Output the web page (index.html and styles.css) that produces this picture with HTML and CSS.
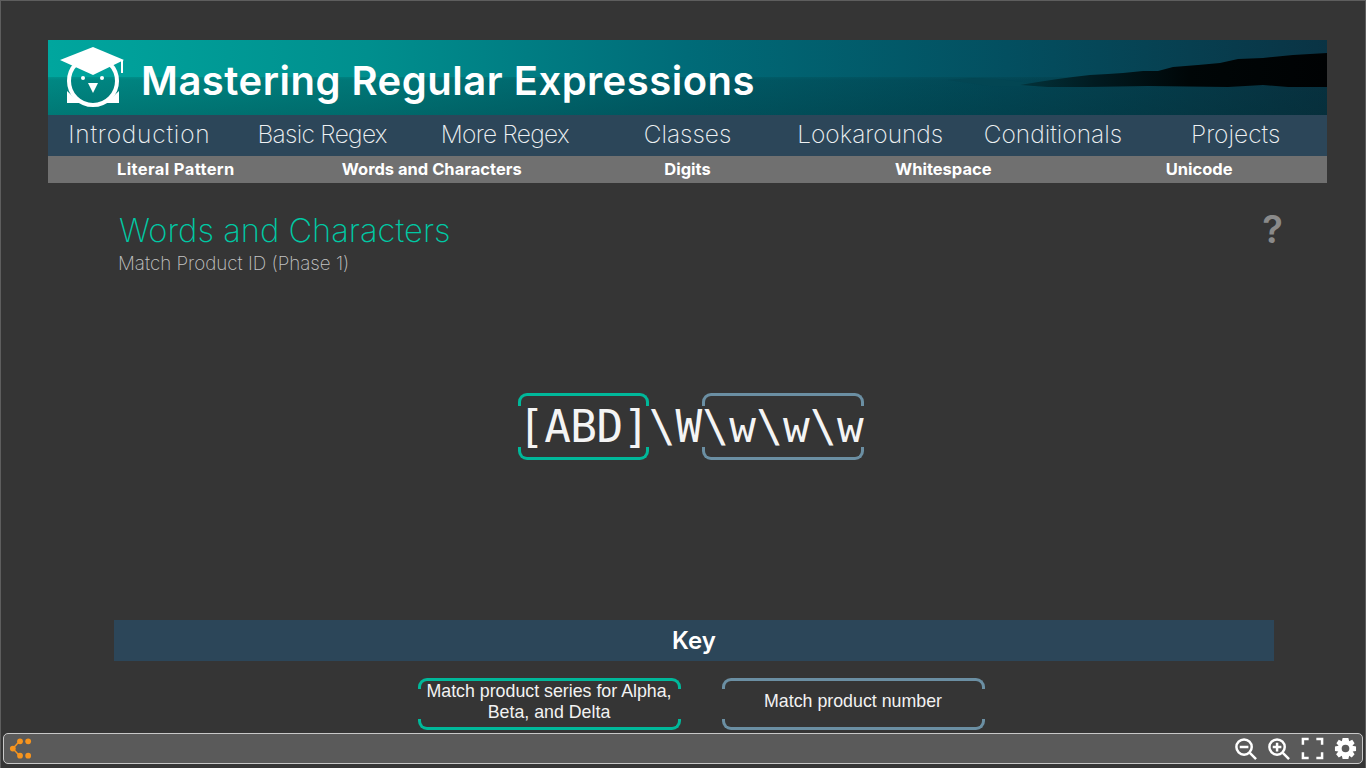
FILE: index.html
```html
<!DOCTYPE html>
<html lang="en">
<head>
<meta charset="utf-8">
<title>Mastering Regular Expressions</title>
<link rel="stylesheet" href="styles.css">
</head>
<body>
<div class="stage">
  <header class="banner">
    <svg class="banner-art" viewBox="0 0 1279 75" preserveAspectRatio="none" aria-hidden="true">
      <defs>
        <linearGradient id="islandFade" x1="0" x2="1" y1="0" y2="0">
          <stop offset="0" stop-color="#02333b"/>
          <stop offset=".25" stop-color="#011a20"/>
          <stop offset=".55" stop-color="#000607"/>
          <stop offset="1" stop-color="#000203"/>
        </linearGradient>
      </defs>
      <path class="island-far" d="M900 40 L925 38 L950 39 L975 42 L990 47 L940 46 Z"/>
      <path fill="url(#islandFade)" d="M972 45 L990 42 L1010 39 L1025 37 L1042 35 L1060 34 L1075 33 L1095 31 L1110 31 L1125 27 L1150 25 L1172 23 L1190 19 L1215 18 L1245 15 L1279 13 L1279 47 L1240 47 L1215 45 L1180 47 L1100 46 L1040 47 L1000 47 Z"/>
    </svg>
    <svg class="owl" viewBox="0 0 70 62" aria-hidden="true">
      <circle class="owl-ring" cx="33" cy="35" r="24"/>
      <path class="owl-fill" d="M7 45 L7 57 L20 57 Z"/>
      <path class="owl-fill" d="M59 45 L59 57 L46 57 Z"/>
      <path class="owl-cap" d="M0 14 L33 1 L64 14 L33 29 Z"/>
      <path class="owl-tassel" d="M62 14 L62 27"/>
      <circle class="owl-fill" cx="23" cy="32" r="2"/>
      <circle class="owl-fill" cx="42" cy="32" r="2"/>
      <path class="owl-fill" d="M28 37 L38 37 L33 47 Z"/>
    </svg>
    <h1 class="banner-title">Mastering Regular Expressions</h1>
  </header>
  <nav class="nav">
    <a class="wide">Introduction</a><a class="tight">Basic Regex</a><a class="tight">More Regex</a><a>Classes</a><a>Lookarounds</a><a>Conditionals</a><a>Projects</a>
  </nav>
  <nav class="subnav">
    <a class="wide">Literal Pattern</a><a>Words and Characters</a><a>Digits</a><a>Whitespace</a><a>Unicode</a>
  </nav>

  <section class="heading">
    <div>
      <h2 class="title">Words and Characters</h2>
      <p class="subtitle">Match Product ID (Phase 1)</p>
    </div>
    <span class="help">?</span>
  </section>

  <section class="regex">
    <span class="group group-green">[ABD]</span><span>\W</span><span class="group group-blue">\w\w\w</span>
  </section>

  <section class="key">
    <div class="key-head">Key</div>
    <div class="key-items">
      <div class="group group-green key-item">Match product series for Alpha, Beta, and Delta</div>
      <div class="group group-blue key-item">Match product number</div>
    </div>
  </section>
</div>

<footer class="toolbar">
  <svg class="tool share" viewBox="0 0 24 24" aria-hidden="true">
    <path class="share-line" d="M4 12 L11 4.5 M4 12 L11 19.5"/>
    <circle cx="4" cy="12" r="3"/><circle cx="11.5" cy="4.5" r="3"/><circle cx="20" cy="4.5" r="3"/><circle cx="11.5" cy="19.5" r="3"/><circle cx="20" cy="19.5" r="3"/>
  </svg>
  <div class="tools">
    <svg class="tool" viewBox="0 0 24 24" aria-hidden="true"><circle cx="10.5" cy="10.5" r="8"/><path d="M6 10.5 H15 M16.5 16.5 L23 23"/></svg>
    <svg class="tool" viewBox="0 0 24 24" aria-hidden="true"><circle cx="10.5" cy="10.5" r="8"/><path d="M6 10.5 H15 M10.5 6 V15 M16.5 16.5 L23 23"/></svg>
    <svg class="tool" viewBox="0 0 24 24" aria-hidden="true"><path d="M2 8 V2 H8 M16 2 H22 V8 M22 16 V22 H16 M8 22 H2 V16"/></svg>
    <svg class="tool gear" viewBox="0 0 24 24" aria-hidden="true"><path d="M9 1 H15 L15.8 4.5 L19 2.8 L21.5 6.5 L19.2 9 L23 10 V14.5 L19.5 15 L21.5 18 L18.5 21.5 L15.8 19.5 L15 23 H9 L8.2 19.5 L5 21.5 L2.2 18 L4.5 15 L1 14.5 V10 L4.8 9 L2.5 6.5 L5 2.8 L8.2 4.5 Z M12 8 A4 4 0 1 0 12 16 A4 4 0 1 0 12 8 Z"/></svg>
  </div>
</footer>
</body>
</html>
```
FILE: styles.css
```css
* { box-sizing: border-box; }
html, body { margin: 0; height: 768px; overflow: hidden; }
body {
  position: relative;
  background: #353535;
  border: 1px solid #5e5e5e;
  border-bottom: 0;
  font-family: Inter, "Liberation Sans", sans-serif;
  color: #fff;
}
.stage {
  display: flex;
  flex-direction: column;
  padding: 39px 38px 0 47px;
  height: 732px;
  overflow: hidden;
}
.banner {
  position: relative;
  display: flex;
  align-items: center;
  height: 75px;
  flex: none;
  padding-left: 12px;
  background: linear-gradient(90deg, #00a69e 0%, #008f8e 25%, #006b78 50%, #034f60 75%, #0a3344 100%);
  overflow: hidden;
}
.banner::after {
  content: "";
  position: absolute;
  left: 0; right: 0; bottom: 0;
  height: 38px;
  background: linear-gradient(180deg, rgba(0,50,50,.16) 0, rgba(0,40,45,.24) 3px, rgba(0,40,45,.36) 100%);
}
.banner-art { position: absolute; inset: 0; width: 100%; height: 100%; z-index: 1; }
.island-far { fill: #034653; }
.owl { position: relative; z-index: 2; width: 70px; height: 62px; flex: none; margin-top: -2px; }
.owl-ring { fill: none; stroke: #fff; stroke-width: 4; }
.owl-fill, .owl-cap { fill: #fff; }
.owl-tassel { stroke: #fff; stroke-width: 2; fill: none; }
.banner-title {
  position: relative;
  z-index: 2;
  margin: 5px 0 0 11px;
  font-size: 40px;
  font-weight: 600;
  letter-spacing: .5px;
  white-space: nowrap;
}
.nav {
  display: grid;
  grid-template-columns: repeat(7, 1fr);
  height: 41px;
  flex: none;
  background: #2c4659;
  text-align: center;
  font-size: 24.5px;
  font-weight: 200;
  line-height: 39px;
  color: #eef1f3;
}
.nav .wide { letter-spacing: .8px; }
.nav .tight { letter-spacing: -.7px; }
.subnav {
  display: grid;
  grid-template-columns: repeat(5, 1fr);
  height: 27px;
  flex: none;
  background: #707070;
  text-align: center;
  font-size: 16.5px;
  font-weight: 700;
  line-height: 26px;
}
.subnav .wide { letter-spacing: .35px; }
.heading {
  display: flex;
  justify-content: space-between;
  align-items: flex-start;
  padding: 26px 44px 0 70px;
  flex: none;
}
.title {
  margin: 0 0 0 1px;
  font-size: 32.7px;
  font-weight: 200;
  line-height: 42px;
  color: #00c8a4;
}
.subtitle {
  margin: 2px 0 0;
  font-size: 18.8px;
  font-weight: 200;
  line-height: 22px;
  color: #c4c4c4;
}
.help {
  margin-top: -3px;
  font-size: 38px;
  font-weight: 600;
  line-height: 46px;
  color: #8a8a8a;
}
.regex {
  display: flex;
  justify-content: center;
  align-items: center;
  margin: 118px 0 0 7px;
  flex: none;
  height: 67px;
  font-family: "DejaVu Sans Mono", "Liberation Mono", monospace;
  font-size: 44.3px;
  color: #f4f4f4;
}
.group {
  position: relative;
  display: block;
  height: 67px;
  line-height: 67px;
}
.group::before, .group::after {
  content: "";
  position: absolute;
  left: 0; right: 0;
  height: 10px;
  border: 3px solid #00b89a;
}
.group::before { top: 0; border-bottom: 0; border-radius: 9px 9px 0 0; }
.group::after { bottom: 0; border-top: 0; border-radius: 0 0 9px 9px; }
.group-blue::before, .group-blue::after { border-color: #6b8fa3; }
.regex .group-green { letter-spacing: -.5px; }
.regex .group-blue { letter-spacing: .3px; }
.key { margin-top: auto; flex: none; margin-left: 66px; margin-right: 53px; }
.key-head {
  height: 41px;
  padding-top: 1px;
  background: #2c4659;
  text-align: center;
  font-size: 24px;
  font-weight: 600;
  line-height: 40px;
}
.key-items {
  display: flex;
  justify-content: center;
  gap: 41px;
  margin: 17px 0 3px;
  padding-left: 14px;
}
.key-item {
  display: flex;
  align-items: center;
  justify-content: center;
  width: 263px;
  height: 52px;
  padding: 0 6px 5px;
  text-align: center;
  font-family: "Liberation Sans", Arial, sans-serif;
  font-size: 17.8px;
  line-height: 21px;
  color: #f2f2f2;
}
.key-item::before, .key-item::after { height: 8px; }
.toolbar {
  position: absolute;
  left: 2px; right: 2px; top: 732px;
  height: 31px;
  display: flex;
  align-items: center;
  justify-content: space-between;
  padding: 0 5px 0 5px;
  background: #5a5a5a;
  border: 1px solid #c8c8c8;
  border-radius: 5px;
}
.tools { display: flex; gap: 10.5px; align-items: center; }
.tool { width: 23px; height: 23px; fill: none; stroke: #fff; stroke-width: 2.6; }
.share { fill: #f7941d; stroke: none; }
.share-line { stroke: #f7941d; stroke-width: 1.5; fill: none; }
.gear { fill: #fff; fill-rule: evenodd; stroke: none; }
```
